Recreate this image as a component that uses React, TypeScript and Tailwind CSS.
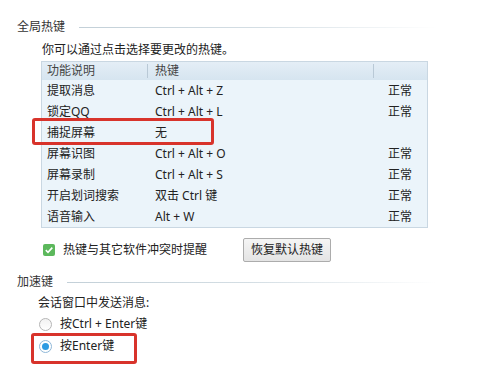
import React from 'react';

const rows = [
  { name: '提取消息', key: 'Ctrl + Alt + Z', state: '正常' },
  { name: '锁定QQ', key: 'Ctrl + Alt + L', state: '正常' },
  { name: '捕捉屏幕', key: '无', state: '' },
  { name: '屏幕识图', key: 'Ctrl + Alt + O', state: '正常' },
  { name: '屏幕录制', key: 'Ctrl + Alt + S', state: '正常' },
  { name: '开启划词搜索', key: '双击 Ctrl 键', state: '正常' },
  { name: '语音输入', key: 'Alt + W', state: '正常' },
];

const font = "font-['Noto_Sans','Noto_Sans_CJK_SC',sans-serif]";

const SectionTitle = ({ title, lineWidth }: { title: string; lineWidth: string }) => (
  <div className="flex h-4 items-center">
    <span className="text-[12px] leading-4 text-[#333]">{title}</span>
    <div className={`ml-[14px] h-px ${lineWidth} bg-gradient-to-r from-[#c3d0d8] via-[#d4dee4] to-white`} />
  </div>
);

export default function App() {
  return (
    <div className={`relative h-[374px] w-[500px] overflow-hidden bg-white pl-[17px] pt-[19px] ${font}`}>
      <SectionTitle title="全局热键" lineWidth="w-[358px]" />

      <p className="ml-[25px] mt-[7px] text-[12px] leading-4 text-[#222]">
        你可以通过点击选择要更改的热键。
      </p>

      {/* hotkey table */}
      <div className="ml-[24px] mt-[3px] w-[387px] border border-[#c9d7e2] bg-[#ebf4fa]">
        <div className="flex h-[18px] items-center bg-gradient-to-b from-[#e4eef6] to-[#d6e5f0] text-[12px] text-[#444]">
          <div className="w-[105px] pl-[5px]">功能说明</div>
          <div className="h-[14px] w-px bg-[#b9c9d6]" />
          <div className="w-[225px] pl-[7px]">热键</div>
          <div className="h-[14px] w-px bg-[#b9c9d6]" />
        </div>
        {rows.map(r => (
          <div key={r.name} className="flex h-[21px] items-center text-[12px] text-[#222]">
            <div className="w-[106px] pl-[5px]">{r.name}</div>
            <div className="w-[240px] pl-[7px]">{r.key}</div>
            <div>{r.state}</div>
          </div>
        ))}
      </div>

      <div className="mt-[10px] flex h-6 items-center">
        <div className="ml-[26px] flex h-[12px] w-[12px] items-center justify-center rounded-[2px] bg-[#5cb85c]">
          <svg width="10" height="10" viewBox="0 0 10 10">
            <path d="M1.8 5.2 L4 7.3 L8.3 2.6" fill="none" stroke="white" strokeWidth="1.6" />
          </svg>
        </div>
        <span className="ml-[8px] text-[12px] text-[#222]">热键与其它软件冲突时提醒</span>
        <button className="ml-[36px] h-6 w-[88px] rounded-[2px] border border-[#acacac] bg-gradient-to-b from-[#f5f5f5] to-[#e4e4e4] text-[12px] text-[#222]">
          恢复默认热键
        </button>
      </div>

      <div className="mt-[12px]">
        <SectionTitle title="加速键" lineWidth="w-[369px]" />
      </div>

      <p className="ml-[21px] mt-[5px] text-[12px] leading-4 text-[#222]">会话窗口中发送消息:</p>

      <div className="ml-[22px] mt-[5px] flex h-4 items-center">
        <div className="h-[13px] w-[13px] rounded-full border border-[#b5b5b5] bg-gradient-to-b from-[#f2f2f2] to-white" />
        <span className="ml-[8px] text-[12px] text-[#222]">按Ctrl + Enter键</span>
      </div>

      <div className="ml-[22px] mt-[6px] flex h-4 items-center">
        <div className="flex h-[13px] w-[13px] items-center justify-center rounded-full border border-[#8fb8d8] bg-white">
          <div className="h-[7px] w-[7px] rounded-full bg-[#2d9be2]" />
        </div>
        <span className="ml-[8px] text-[12px] text-[#222]">按Enter键</span>
      </div>

      {/* annotation boxes */}
      <div className="absolute left-[32px] top-[118px] h-[27px] w-[182px] rounded-[3px] border-[3px] border-[#d8332b]" />
      <div className="absolute left-[31px] top-[333px] h-[31px] w-[106px] rounded-[3px] border-[3px] border-[#d8332b]" />
    </div>
  );
}
